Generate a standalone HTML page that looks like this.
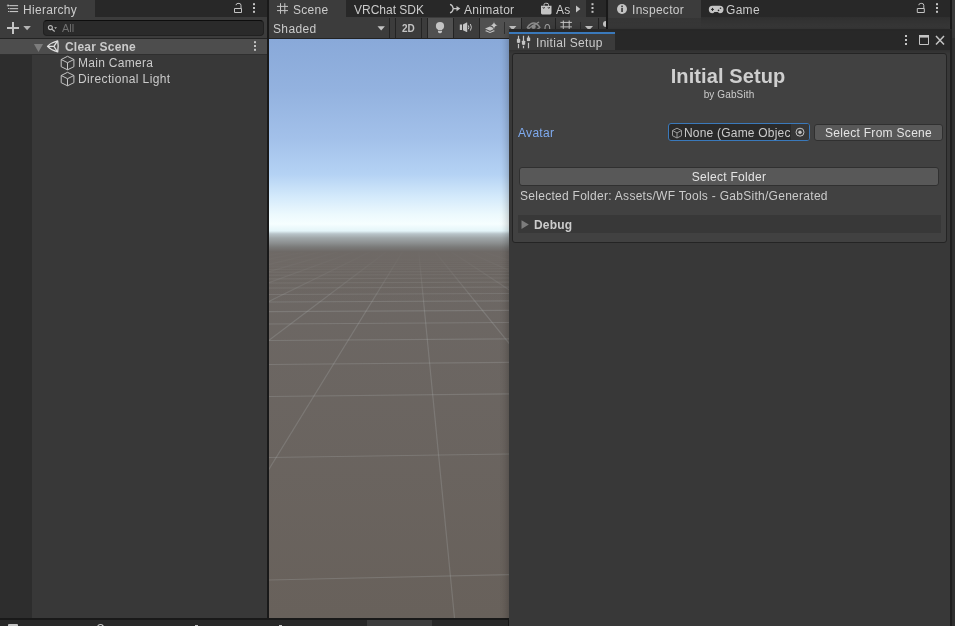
<!DOCTYPE html>
<html><head><meta charset="utf-8">
<title>Unity Editor</title>
<style>
*{box-sizing:border-box;margin:0;padding:0}
html,body{width:955px;height:626px;overflow:hidden;background:#191919;font-family:"Liberation Sans",sans-serif;font-size:12px;color:#d2d2d2}
.abs{position:absolute}
svg{position:absolute;overflow:visible}
.t{position:absolute;white-space:nowrap;line-height:14px;color:#cbcbcb;will-change:transform}
/* hierarchy */
#hier{left:0;top:0;width:267px;height:618px;background:#383838;overflow:hidden}
#hier .tabbar{left:0;top:0;width:267px;height:18px;background:#282828}
#hier .tab{left:0;top:0;width:95px;height:18px;background:#3c3c3c}
#hier .toolbar{left:0;top:18px;width:267px;height:21px;background:#3c3c3c;border-bottom:1px solid #232323;box-shadow:0 -1px 0 #3c3c3c}
#hier .search{left:43px;top:2px;width:221px;height:16px;background:#2a2a2a;border:1px solid #212121;border-top-color:#0d0d0d;border-radius:4px}
#hier .gutter{left:0;top:55px;width:32px;height:563px;background:#2d2d2d}
#hier .scenerow{left:0;top:39px;width:267px;height:15px;background:#4d4d4d}
#hier .rowline{left:0;top:54px;width:267px;height:1px;background:#2f2f2f}
/* scene */
#scene{left:269px;top:0;width:337px;height:618px;background:#383838;overflow:hidden}
#scene .tabbar{left:0;top:0;width:338px;height:18px;background:#282828}
#scene .tab{left:0;top:0;width:77px;height:18px;background:#3c3c3c}
#scene .toolbar{left:0;top:18px;width:338px;height:21px;background:#3c3c3c;border-bottom:1px solid #232323;box-shadow:0 -1px 0 #3c3c3c}
.sep{position:absolute;top:0;width:1px;height:20px;background:#232323}
.on{position:absolute;top:0;height:20px;background:#505050}
#view{left:0;top:39px;width:240px;height:579px;overflow:hidden;background:#69625c}
/* inspector */
#insp{left:609px;top:0;width:341px;height:626px;background:#383838;box-shadow:-1px 0 0 #3a3a3a}
#insp .tabbar{left:0;top:0;width:341px;height:17px;background:#282828}
#insp .shade{left:0;top:17px;width:341px;height:11px;background:linear-gradient(#2f2f2f,#393939)}
#rstrip{left:952px;top:0;width:3px;height:626px;background:#323232}
#insp .tab{left:0;top:0;width:92px;height:18px;background:#3c3c3c}
/* floating window */
#win{left:509px;top:29px;width:443px;height:597px;background:#383838;border-right:2px solid #1f1f1f;border-top:2px solid #272727;box-shadow:-1px 1px 7px rgba(0,0,0,.22)}
#win .tabbar{left:0;top:0;width:441px;height:19px;background:#282828}
#win .tab{left:0;top:1px;width:106px;height:18px;background:#3b3b3b;border-top:2px solid #3a79bb}
#box{left:3px;top:22px;width:435px;height:190px;background:#414141;border:1px solid #242424;border-radius:3px}
.btn{position:absolute;background:#585858;border:1px solid #303030;border-radius:3px}
#bottom{left:0;top:620px;width:508px;height:6px;background:#282828}
</style></head><body>

<div id="hier" class="abs">
  <div class="tabbar abs"></div>
  <div class="tab abs"></div>
  <span class="t" style="left:23px;top:3px;letter-spacing:.3px">Hierarchy</span>
  <div class="toolbar abs">
    <div class="search abs"></div>
    <svg style="left:46px;top:5px" width="14" height="12" viewBox="0 0 14 12">
      <circle cx="4.4" cy="4.6" r="2" fill="none" stroke="#b8b8b8" stroke-width="1.1"/>
      <path d="M6 6.2l2.7 2.3" stroke="#b8b8b8" stroke-width="1.2" fill="none"/>
      <path d="M8.2 4.2h2.8l-1.4 1.7z" fill="#b8b8b8"/>
    </svg>
    <span class="t" style="left:62px;top:3px;color:#707070;font-size:11px">All</span>
  </div>
  <svg style="left:0;top:0" width="267" height="60" viewBox="0 0 267 60">
    <g fill="#c4c4c4">
      <rect x="9.500" y="5.100" width="8.600" height="1.100"/><rect x="9.500" y="8.100" width="8.600" height="1.100"/><rect x="9.500" y="11" width="8.600" height="1.100"/>
      <rect x="8" y="5" width="1" height="1"/><rect x="8" y="8" width="1" height="1"/><rect x="8" y="11" width="1" height="1"/>
      <rect x="7.5" y="4" width="1" height="3" opacity=".6"/><rect x="6.8" y="5" width="3" height="1" opacity=".6"/>
      <!-- lock -->
      <path d="M234.5 8.5h7v4h-7z M236 5.2v-.2a2 2 0 0 1 2-1.6h1a2 2 0 0 1 2 2v3" fill="none" stroke="#c4c4c4" stroke-width="1"/>
      <!-- kebab -->
      <rect x="253" y="3.2" width="2" height="2"/><rect x="253" y="7" width="2" height="2"/><rect x="253" y="10.8" width="2" height="2"/>
      <!-- plus -->
      <rect x="7" y="27" width="12" height="2"/><rect x="12" y="22" width="2" height="12"/>
      <path d="M23.3 26h7.6l-3.8 4.3z" fill="#b4b4b4"/>
    </g>
  </svg>
  <div class="gutter abs"></div>
  <div class="scenerow abs"></div>
  <div class="rowline abs"></div>
  <svg style="left:0;top:0" width="267" height="100" viewBox="0 0 267 100">
    <path d="M33.9 44h9.2l-4.6 8z" fill="#7c7c7c"/>
    <g fill="#c4c4c4"><rect x="254" y="41.200" width="2" height="2"/><rect x="254" y="45" width="2" height="2"/><rect x="254" y="48.800" width="2" height="2"/></g>
    <g fill="none" stroke="#e0e0e0" stroke-width="1.3" stroke-linejoin="round">
      <path d="M47.5 46.4Q51.500 42.300 57.700 40.900Q58.700 46.400 57.700 51.900Q51.500 50.500 47.500 46.400Z"/>
      <path d="M47.6 46.4H53.9M53.9 46.4L57.3 41.4M53.9 46.4L57.3 51.5"/>
    </g>
    <g fill="none" stroke="#c4c4c4" stroke-width="1" stroke-linejoin="round">
      <path d="M67.5 56.3L73.9 59.5V66.7L67.5 69.8L61.2 66.7V59.5ZM61.2 59.5L67.5 62.7L73.9 59.5M67.5 62.7V69.8"/>
      <path d="M67.5 72.3L73.9 75.5V82.7L67.5 85.8L61.2 82.7V75.5ZM61.2 75.5L67.5 78.7L73.9 75.5M67.5 78.7V85.8"/>
    </g>
  </svg>
  <span class="t" style="left:65px;top:40px;font-weight:bold;letter-spacing:.2px">Clear Scene</span>
  <span class="t" style="left:78px;top:56px;letter-spacing:.3px">Main Camera</span>
  <span class="t" style="left:78px;top:72px;letter-spacing:.38px">Directional Light</span>
</div>

<div id="scene" class="abs">
  <div class="tabbar abs"></div>
  <div class="tab abs"></div>
  <div class="abs" style="left:301px;top:0;width:16px;height:18px;background:#3a3a3a"></div>
  <svg style="left:0;top:0" width="338" height="18" viewBox="0 0 338 18">
    <!-- scene # icon -->
    <g stroke="#c4c4c4" stroke-width="1" fill="none">
      <path d="M11.5 3.2v10.6M15.8 3.2v10.6M8 6.4h11M8 10.6h11"/>
    </g>
    <!-- animator icon -->
    <g stroke="#c4c4c4" stroke-width="1.3" fill="none">
      <path d="M181 4.400Q183.600 5 184.300 8.600Q183.600 12.200 181 12.800M184.300 8.600H188"/>
    </g>
    <path d="M187.500 6l3.800 2.600l-3.800 2.600z" fill="#c4c4c4"/>
    <!-- bag -->
    <path d="M272 5.8h10.5v7.3a1.3 1.3 0 0 1 -1.3 1.3h-7.9a1.3 1.3 0 0 1 -1.3 -1.3z" fill="#c4c4c4"/>
    <path d="M275 5.8v-1a1.5 1.5 0 0 1 1.5 -1.5h1.5a1.5 1.5 0 0 1 1.5 1.5v1" fill="none" stroke="#c4c4c4" stroke-width="1"/>
    <path d="M273.700 7l1 1.500l1-1.500M278.800 7l1 1.500l1-1.500" fill="none" stroke="#3a3a3a" stroke-width=".9"/>
    <!-- scroll arrow -->
    <path d="M307 5.6l4.4 3.5l-4.4 3.5z" fill="#c4c4c4"/>
    <g fill="#c4c4c4"><rect x="322.5" y="3.2" width="2" height="2"/><rect x="322.5" y="7" width="2" height="2"/><rect x="322.5" y="10.8" width="2" height="2"/></g>
  </svg>
  <span class="t" style="left:24px;top:3px;letter-spacing:.3px">Scene</span>
  <span class="t" style="left:85px;top:3px;letter-spacing:0">VRChat SDK</span>
  <span class="t" style="left:195px;top:3px;letter-spacing:.3px">Animator</span>
  <span class="t" style="left:287px;top:3px;letter-spacing:.3px">As</span>
  <div class="toolbar abs">
    <div class="sep" style="left:120px"></div>
    <div class="sep" style="left:126px"></div>
    <div class="sep" style="left:152px"></div>
    <div class="sep" style="left:158px"></div>
    <div class="on" style="left:159px;width:25px"></div>
    <div class="sep" style="left:184px"></div>
    <div class="sep" style="left:210px"></div>
    <div class="on" style="left:211px;width:41px"></div>
    <div class="sep" style="left:252px"></div>
    <div class="sep" style="left:286px"></div>
    <div class="sep" style="left:329px"></div>
    <div class="sep" style="left:235px;top:4px;height:12px;background:#303030"></div>
    <div class="sep" style="left:311px;top:4px;height:12px;background:#2a2a2a"></div>
    <svg style="left:0;top:0" width="338" height="20" viewBox="0 0 338 20">
      <path d="M108.5 8.2h7.4l-3.7 4.2z" fill="#c4c4c4"/>
      <!-- bulb -->
      <circle cx="171" cy="8" r="4.1" fill="#c4c4c4"/>
      <path d="M169 10h4v3.600a1.600 1.600 0 0 1 -1.600 1.600h-.8a1.600 1.600 0 0 1 -1.600 -1.600z" fill="#c4c4c4"/>
      <rect x="168.600" y="12.100" width="4.800" height=".7" fill="#505050"/>
      <!-- audio -->
      <path d="M190.800 6.600h2.200v5.400h-2.200zM194 6.400l3.600-1.900h.6v9.600h-.6L194 12.200z" fill="#c4c4c4"/>
      <path d="M199.300 7.400q1.100 1.900 0 3.800M201.400 6q2 3.300 0 6.600" stroke="#c4c4c4" stroke-width="1" fill="none"/>
      <!-- fx -->
      <path d="M216 10.600l5 -2.200l5 2.200l-5 2.200z" fill="#c4c4c4"/>
      <path d="M216 12.900l1.300 -.6l3.700 1.700l3.700 -1.700l1.300 .6l-5 2.200z" fill="#c4c4c4"/>
      <path d="M225 2.900Q225.500 6.800 229.200 7.300Q225.500 7.800 225 11.700Q224.500 7.800 220.800 7.300Q224.500 6.800 225 2.900Z" fill="#c4c4c4" stroke="#505050" stroke-width=".7"/>
      <path d="M240 8h7.400l-3.700 4.200z" fill="#c4c4c4"/>
      <!-- hidden eye -->
      <g stroke="#8e8e8e" fill="none" stroke-width="1.4">
        <path d="M258.300 9.300q6.300 -8.500 12.600 0q-6.300 7 -12.600 0z"/>
        <path d="M258.600 11L270 4"/>
      </g>
      <circle cx="264.600" cy="8.800" r="2.200" fill="#8e8e8e"/>
      <!-- grid -->
      <g stroke="#c4c4c4" stroke-width="1" fill="none">
        <path d="M294.300 2.500v10M300.200 2.500v10M291.400 4.400h11.500M291.400 8.900h11.500"/>
      </g>
      <path d="M316 8h8l-4 4.400z" fill="#c4c4c4"/>
      <circle cx="337" cy="6" r="3" fill="#c4c4c4"/>
    </svg>
    <span class="t" style="left:4px;top:4px;letter-spacing:.35px">Shaded</span>
    <span class="t" style="left:133px;top:4px;font-weight:bold;font-size:10px;letter-spacing:0;color:#c4c4c4">2D</span>
    <span class="t" style="left:275px;top:4px;color:#a2a2a2">0</span>
  </div>
  <div id="view" class="abs">
    <svg style="left:0;top:0" width="240" height="579" viewBox="0 0 240 579">
      <defs>
        <linearGradient id="sky" x1="0" y1="0" x2="0" y2="1">
          <stop offset="0" stop-color="#89a9d9"/>
          <stop offset="0.24" stop-color="#93b2df"/>
          <stop offset="0.474" stop-color="#a3c1ea"/>
          <stop offset="0.634" stop-color="#b4d2f4"/>
          <stop offset="0.742" stop-color="#d4eafb"/>
          <stop offset="0.822" stop-color="#ecf9fd"/>
          <stop offset="0.869" stop-color="#f6feff"/>
          <stop offset="0.901" stop-color="#e4f5f9"/>
          <stop offset="0.915" stop-color="#b8c4c9"/>
          <stop offset="0.934" stop-color="#a0a7a9"/>
          <stop offset="0.958" stop-color="#8c8f90"/>
          <stop offset="0.977" stop-color="#7a7a79"/>
          <stop offset="1" stop-color="#6d6865"/>
        </linearGradient>
        <linearGradient id="fade" x1="0" y1="0" x2="0" y2="1">
          <stop offset="0" stop-color="#6d6865" stop-opacity="1"/>
          <stop offset="0.3" stop-color="#6c6662" stop-opacity=".8"/>
          <stop offset="1" stop-color="#6a635d" stop-opacity="0"/>
        </linearGradient>
        <linearGradient id="gnd" x1="0" y1="0" x2="0" y2="1">
          <stop offset="0" stop-color="#6d6865"/>
          <stop offset="1" stop-color="#68615b"/>
        </linearGradient>
        <linearGradient id="shd" x1="0" y1="0" x2="1" y2="0">
          <stop offset="0" stop-color="#000" stop-opacity="0"/>
          <stop offset="1" stop-color="#000" stop-opacity=".04"/>
        </linearGradient>
      </defs>
      <rect y="212" width="240" height="367" fill="url(#gnd)"/>
      <g stroke="#b4b6b6" stroke-opacity=".24" stroke-width="1.2" fill="none">
<line x1="147.5" y1="190.0" x2="-3693.6" y2="579.0"/>
<line x1="147.5" y1="190.0" x2="-3416.6" y2="579.0"/>
<line x1="147.5" y1="190.0" x2="-3139.5" y2="579.0"/>
<line x1="147.5" y1="190.0" x2="-2862.4" y2="579.0"/>
<line x1="147.5" y1="190.0" x2="-2585.3" y2="579.0"/>
<line x1="147.5" y1="190.0" x2="-2308.2" y2="579.0"/>
<line x1="147.5" y1="190.0" x2="-2031.1" y2="579.0"/>
<line x1="147.5" y1="190.0" x2="-1754.0" y2="579.0"/>
<line x1="147.5" y1="190.0" x2="-1477.0" y2="579.0"/>
<line x1="147.5" y1="190.0" x2="-1199.9" y2="579.0"/>
<line x1="147.5" y1="190.0" x2="-922.8" y2="579.0"/>
<line x1="147.5" y1="190.0" x2="-645.7" y2="579.0"/>
<line x1="147.5" y1="190.0" x2="-368.6" y2="579.0"/>
<line x1="147.5" y1="190.0" x2="-91.5" y2="579.0"/>
<line x1="147.5" y1="190.0" x2="185.5" y2="579.0"/>
<line x1="147.5" y1="190.0" x2="462.6" y2="579.0"/>
<line x1="147.5" y1="190.0" x2="739.7" y2="579.0"/>
<line x1="147.5" y1="190.0" x2="1016.8" y2="579.0"/>
<line x1="147.5" y1="190.0" x2="1293.9" y2="579.0"/>
<line x1="147.5" y1="190.0" x2="1571.0" y2="579.0"/>
<line x1="147.5" y1="190.0" x2="1848.1" y2="579.0"/>
<line x1="147.5" y1="190.0" x2="2125.1" y2="579.0"/>
<line x1="147.5" y1="190.0" x2="2402.2" y2="579.0"/>
<line x1="147.5" y1="190.0" x2="2679.3" y2="579.0"/>
<line x1="147.5" y1="190.0" x2="2956.4" y2="579.0"/>
<line x1="147.5" y1="190.0" x2="3233.5" y2="579.0"/>
<line x1="147.5" y1="190.0" x2="3510.6" y2="579.0"/>
<line x1="147.5" y1="190.0" x2="3787.6" y2="579.0"/>
<line x1="147.5" y1="190.0" x2="4064.7" y2="579.0"/>
<line x1="0.0" y1="541.0" x2="240.0" y2="535.6"/>
<line x1="0.0" y1="418.5" x2="240.0" y2="415.0"/>
<line x1="0.0" y1="357.5" x2="240.0" y2="354.9"/>
<line x1="0.0" y1="325.5" x2="240.0" y2="323.4"/>
<line x1="0.0" y1="301.5" x2="240.0" y2="299.8"/>
<line x1="0.0" y1="285.0" x2="240.0" y2="283.5"/>
<line x1="0.0" y1="272.6" x2="240.0" y2="271.3"/>
<line x1="0.0" y1="263.0" x2="240.0" y2="261.9"/>
<line x1="0.0" y1="255.5" x2="240.0" y2="254.5"/>
<line x1="0.0" y1="249.0" x2="240.0" y2="248.1"/>
<line x1="0.0" y1="244.0" x2="240.0" y2="243.2"/>
<line x1="0.0" y1="239.8" x2="240.0" y2="239.0"/>
<line x1="0.0" y1="236.2" x2="240.0" y2="235.5"/>
<line x1="0.0" y1="233.1" x2="240.0" y2="232.4"/>
<line x1="0.0" y1="230.3" x2="240.0" y2="229.7"/>
<line x1="0.0" y1="227.9" x2="240.0" y2="227.4"/>
<line x1="0.0" y1="225.8" x2="240.0" y2="225.3"/>
<line x1="0.0" y1="223.9" x2="240.0" y2="223.4"/>
<line x1="0.0" y1="222.2" x2="240.0" y2="221.7"/>
<line x1="0.0" y1="220.7" x2="240.0" y2="220.2"/>
<line x1="0.0" y1="219.2" x2="240.0" y2="218.8"/>
<line x1="0.0" y1="218.0" x2="240.0" y2="217.5"/>
<line x1="0.0" y1="216.8" x2="240.0" y2="216.4"/>
<line x1="0.0" y1="215.7" x2="240.0" y2="215.3"/>
<line x1="0.0" y1="214.7" x2="240.0" y2="214.3"/>
<line x1="0.0" y1="213.8" x2="240.0" y2="213.4"/>
<line x1="0.0" y1="212.9" x2="240.0" y2="212.6"/>
<line x1="0.0" y1="212.1" x2="240.0" y2="211.8"/>
<line x1="0.0" y1="211.4" x2="240.0" y2="211.1"/>
<line x1="0.0" y1="210.7" x2="240.0" y2="210.4"/>
<line x1="0.0" y1="210.1" x2="240.0" y2="209.7"/>
<line x1="0.0" y1="209.4" x2="240.0" y2="209.1"/>
<line x1="0.0" y1="208.9" x2="240.0" y2="208.6"/>
<line x1="0.0" y1="208.3" x2="240.0" y2="208.0"/>
<line x1="0.0" y1="207.8" x2="240.0" y2="207.5"/>
<line x1="0.0" y1="207.3" x2="240.0" y2="207.1"/>
<line x1="0.0" y1="206.9" x2="240.0" y2="206.6"/>
<line x1="0.0" y1="206.4" x2="240.0" y2="206.2"/>
<line x1="0.0" y1="206.0" x2="240.0" y2="205.8"/>
<line x1="0.0" y1="205.6" x2="240.0" y2="205.4"/>
<line x1="0.0" y1="205.3" x2="240.0" y2="205.0"/>
<line x1="0.0" y1="204.9" x2="240.0" y2="204.7"/>
<line x1="0.0" y1="204.6" x2="240.0" y2="204.3"/>
<line x1="0.0" y1="204.2" x2="240.0" y2="204.0"/>
<line x1="0.0" y1="203.9" x2="240.0" y2="203.7"/>
<line x1="0.0" y1="203.6" x2="240.0" y2="203.4"/>
<line x1="0.0" y1="203.3" x2="240.0" y2="203.1"/>
<line x1="0.0" y1="203.1" x2="240.0" y2="202.9"/>
<line x1="0.0" y1="202.8" x2="240.0" y2="202.6"/>
<line x1="0.0" y1="202.6" x2="240.0" y2="202.4"/>
<line x1="0.0" y1="202.3" x2="240.0" y2="202.1"/>
<line x1="0.0" y1="202.1" x2="240.0" y2="201.9"/>
<line x1="0.0" y1="201.9" x2="240.0" y2="201.7"/>
<line x1="0.0" y1="201.6" x2="240.0" y2="201.5"/>
<line x1="0.0" y1="201.4" x2="240.0" y2="201.3"/>
<line x1="0.0" y1="201.2" x2="240.0" y2="201.1"/>
<line x1="0.0" y1="201.0" x2="240.0" y2="200.9"/>
<line x1="0.0" y1="200.8" x2="240.0" y2="200.7"/>
<line x1="0.0" y1="200.7" x2="240.0" y2="200.5"/>
<line x1="0.0" y1="200.5" x2="240.0" y2="200.3"/>
      </g>
      <rect y="206" width="240" height="60" fill="url(#fade)"/>
      <rect width="240" height="213" fill="url(#sky)"/>
      <rect x="230" width="10" height="579" fill="url(#shd)"/>
    </svg>
  </div>
</div>

<div id="rstrip" class="abs"><div class="abs" style="left:0;top:0;width:3px;height:38px;background:#3a3a3a"></div></div>
<div id="insp" class="abs">
  <div class="tabbar abs"></div>
  <div class="shade abs"></div>
  <div class="abs" style="left:-1px;top:18px;width:93px;height:10px;background:linear-gradient(#353535,#393939)"></div>
  <div class="tab abs"></div>
  <svg style="left:0;top:0" width="346" height="18" viewBox="0 0 346 18">
    <circle cx="13" cy="9" r="5" fill="#c4c4c4"/>
    <rect x="12.200" y="8" width="1.700" height="4" fill="#3c3c3c"/><rect x="12.200" y="5.600" width="1.700" height="1.600" fill="#3c3c3c"/>
    <!-- gamepad -->
    <path d="M103.500 5.800h7.300a3.700 3.700 0 0 1 0 7.400q-1 0 -1.900 -1.300h-3.500q-.9 1.300 -1.900 1.300a3.700 3.700 0 0 1 0 -7.400z" fill="#c4c4c4"/>
    <path d="M102 9.400h3M103.500 7.900v3" stroke="#282828" stroke-width="1"/>
    <circle cx="109.500" cy="10.400" r=".8" fill="#282828"/><circle cx="111.500" cy="8.300" r=".8" fill="#282828"/>
    <path d="M308.300 8.500h7v4h-7z M309.800 5.200v-.2a2 2 0 0 1 2-1.600h1a2 2 0 0 1 2 2v3" fill="none" stroke="#c4c4c4" stroke-width="1"/>
    <g fill="#c4c4c4"><rect x="327" y="3.200" width="2" height="2"/><rect x="327" y="7" width="2" height="2"/><rect x="327" y="10.800" width="2" height="2"/></g>
  </svg>
  <span class="t" style="left:23px;top:3px;letter-spacing:.3px">Inspector</span>
  <span class="t" style="left:117px;top:3px;letter-spacing:.3px">Game</span>
</div>

<div id="win" class="abs">
  <div class="abs" style="left:0;top:19px;width:441px;height:4px;background:linear-gradient(#303030,#383838)"></div>
  <div class="tabbar abs"></div>
  <div class="tab abs"></div>
  <svg style="left:0;top:0" width="441" height="20" viewBox="0 0 441 20">
    <g stroke="#c4c4c4" stroke-width="1.200" fill="none"><path d="M9.500 4.800v12.500M14.500 4.800v12.500M19.500 4.800v12.500"/></g>
    <g fill="#3b3b3b"><rect x="8.500" y="11.800" width="2" height="1.100"/><rect x="13.500" y="13.700" width="2" height="1.100"/><rect x="18.500" y="10.100" width="2" height="1.700"/></g>
    <g fill="#c4c4c4"><rect x="7.900" y="7.800" width="3.300" height="4" rx=".6"/><rect x="12.900" y="9.700" width="3.300" height="4" rx=".6"/><rect x="17.900" y="6.500" width="3.300" height="3.600" rx=".6"/></g>
    <g fill="#c4c4c4"><rect x="396" y="4" width="2" height="2"/><rect x="396" y="8" width="2" height="2"/><rect x="396" y="12" width="2" height="2"/></g>
    <path d="M410.500 4.500h9v9h-9z" fill="none" stroke="#c4c4c4" stroke-width="1"/><rect x="410" y="4" width="10" height="2.600" fill="#c4c4c4"/>
    <path d="M427 5l8 8.500M435 5l-8 8.500" stroke="#c4c4c4" stroke-width="1.500" fill="none"/>
  </svg>
  <span class="t" style="left:27px;top:5px;letter-spacing:.3px">Initial Setup</span>
  <div id="box" class="abs"><div class="abs" style="left:1px;top:0">
    <span class="t" style="left:-2px;width:432px;top:10px;text-align:center;font-size:20px;font-weight:bold;line-height:24px;color:#cfcfcf;letter-spacing:.1px">Initial Setup</span>
    <span class="t" style="left:-1px;width:432px;top:35px;text-align:center;font-size:10px;line-height:12px;letter-spacing:.12px">by GabSith</span>
    <span class="t" style="left:4px;top:72px;color:#7fabf0;letter-spacing:.3px">Avatar</span>
    <div class="abs" style="left:154px;top:69px;width:142px;height:18px;background:#2a2a2a;border:1px solid #3a79bb;border-radius:3px;overflow:hidden">
      <div class="abs" style="left:122px;top:0;width:18px;height:16px;background:#373737"></div>
    </div>
    <div class="abs" style="left:170px;top:72px;width:106px;height:14px;overflow:hidden"><span class="t" style="left:0;top:0;letter-spacing:.2px">None (Game Object)</span></div>
    <div class="abs" style="left:4px;top:161px;width:423px;height:18px;background:#383838"></div>
    <svg style="left:0;top:0" width="432" height="188" viewBox="0 0 432 188">
      <g fill="none" stroke="#9c9c9c" stroke-width="1" stroke-linejoin="round">
        <path d="M163 74.200L167.500 76.500V81.700L163 84L158.500 81.700V76.500ZM158.500 76.500L163 78.900L167.500 76.500M163 78.900V84"/>
      </g>
      <circle cx="286" cy="78.200" r="4" fill="none" stroke="#c4c4c4" stroke-width="1"/><circle cx="286" cy="78.200" r="1.700" fill="#c4c4c4"/>
      <path d="M7.500 166.300l7.300 4.300l-7.300 4.300z" fill="#7c7c7c"/>
    </svg>
    <div class="btn" style="left:300px;top:70px;width:129px;height:17px"></div>
    <span class="t" style="left:300px;width:129px;top:72px;text-align:center;letter-spacing:.3px;color:#e4e4e4">Select From Scene</span>
    <div class="btn" style="left:5px;top:113px;width:420px;height:19px"></div>
    <span class="t" style="left:5px;width:420px;top:116px;text-align:center;letter-spacing:.3px;color:#e4e4e4">Select Folder</span>
    <span class="t" style="left:6px;top:135px;letter-spacing:.28px">Selected Folder: Assets/WF Tools - GabSith/Generated</span>
    <span class="t" style="left:20px;top:164px;font-weight:bold;letter-spacing:.2px">Debug</span>
  </div></div>
</div>

<div id="bottom" class="abs">
  <div class="abs" style="left:367px;top:0;width:65px;height:6px;background:#3c3c3c"></div>
  <div class="abs" style="left:8px;top:3.500px;width:10px;height:3px;background:#c4c4c4;border-radius:1px 1px 0 0"></div>
  <div class="abs" style="left:97px;top:4px;width:7px;height:4px;border:1.500px solid #c4c4c4;border-radius:4px 4px 0 0;border-bottom:0"></div>
  <div class="abs" style="left:195px;top:4.500px;width:3px;height:2px;background:#c4c4c4"></div>
  <div class="abs" style="left:279px;top:4.500px;width:3px;height:2px;background:#c4c4c4"></div>
</div>
</body></html>
